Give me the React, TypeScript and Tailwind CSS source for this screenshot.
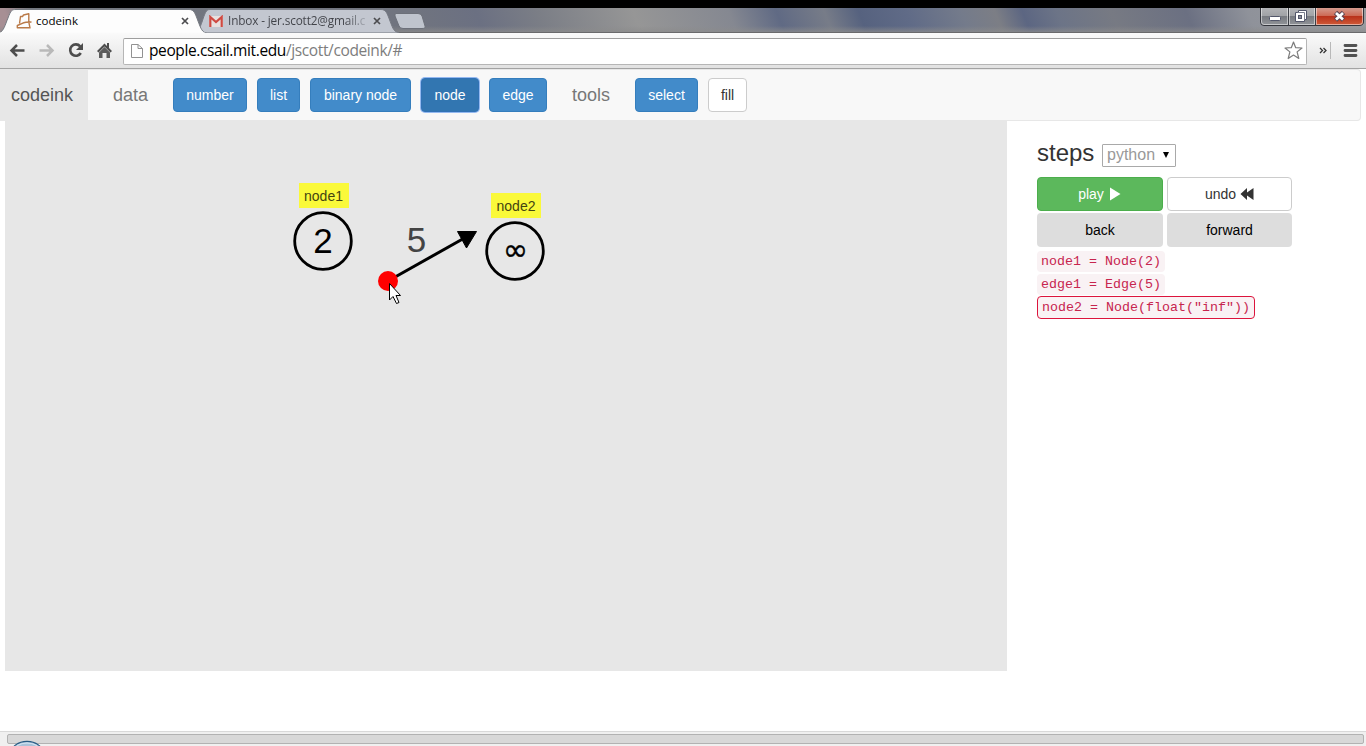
import React from "react";

function TabShapes() {
  return (
    <svg className="absolute inset-0" width="1366" height="25" viewBox="0 8 1366 25">
      <defs>
        <linearGradient id="glass" x1="0" x2="1366" y1="0" y2="0" gradientUnits="userSpaceOnUse" gradientTransform="skewX(22)">
          <stop offset="0" stopColor="#a78f94" />
          <stop offset="0.02" stopColor="#73777f" />
          <stop offset="0.3" stopColor="#70747f" />
          <stop offset="0.345" stopColor="#6b7082" />
          <stop offset="0.39" stopColor="#7b7e86" />
          <stop offset="0.46" stopColor="#969696" />
          <stop offset="0.53" stopColor="#858891" />
          <stop offset="0.565" stopColor="#606a84" />
          <stop offset="0.6" stopColor="#777c88" />
          <stop offset="0.625" stopColor="#56627f" />
          <stop offset="0.66" stopColor="#606b87" />
          <stop offset="0.7" stopColor="#747b8b" />
          <stop offset="0.725" stopColor="#7c7e85" />
          <stop offset="0.745" stopColor="#5c6682" />
          <stop offset="0.77" stopColor="#6c7487" />
          <stop offset="0.81" stopColor="#777a83" />
          <stop offset="0.865" stopColor="#6b7082" />
          <stop offset="0.91" stopColor="#8f929a" />
          <stop offset="1" stopColor="#9a9ca0" />
        </linearGradient>
        <linearGradient id="shade" x1="0" x2="0" y1="0" y2="1">
          <stop offset="0" stopColor="#8b8b8b" stopOpacity="0" />
          <stop offset="1" stopColor="#8b8b8b" stopOpacity="0.85" />
        </linearGradient>
      </defs>
      <rect y="8" width="1366" height="25" fill="url(#glass)" />
      <rect y="26" width="1366" height="7" fill="url(#shade)" />
      <path d="M0 32.500H1366" stroke="#6a6a6c" />
      <path d="M193 33C199 32 200 27 202 22C205 13 206 9.500 210 9.500H381C386 9.500 387 13 390 21C393 29 394 32 399 32.500V33Z" fill="#c3c7d0" stroke="#767a83" />
      <path d="M396 13.500H418Q421 13.500 422 16L425 26Q426 28.500 422 28.500H403Q400 28.500 399 26L395 16Q394.500 13.500 396 13.500Z" fill="#bfc4cd" stroke="#6c7079" />
      <path d="M-1 33C4 31 5 25 8 18C11 10 12 9.500 16 9.500H189C194 9.500 195 13 198 21C201 29 202 32 207 33.500H-1Z" fill="#fdfdfd" stroke="#777b82" />
      <path d="M0 33H205" stroke="#fafafa" />
    </svg>
  );
}

function SiteIcon() {
  return (
    <svg width="16" height="16" viewBox="0 0 16 16" className="shrink-0" fill="none" stroke="#ba7a48" strokeWidth="1.400">
      <path d="M3.500 10.500L4.500 3.500H6.500L7.500 2L12.800 .8V9L14 14.800H1.300V12.500C3.500 12 7 9.500 10 9.200L15.500 9" strokeLinejoin="round" />
    </svg>
  );
}

function MailIcon() {
  return (
    <svg width="14" height="12" viewBox="0 0 14 12" className="shrink-0">
      <path d="M0 1H14V12H0Z" fill="#e8e0df" />
      <path d="M1.300 12V2L7 7L12.700 2V12" fill="none" stroke="#cf4a42" strokeWidth="2.200" />
    </svg>
  );
}

function CloseMark() {
  return (
    <svg width="8" height="8" viewBox="0 0 8 8" className="shrink-0">
      <path d="M1 1L7 7M7 1L1 7" stroke="#4c4c4f" strokeWidth="1.700" />
    </svg>
  );
}

function WindowControls() {
  return (
    <svg width="106" height="19" viewBox="0 0 106 19" className="absolute right-0 top-0">
      <defs>
        <linearGradient id="ctl" x1="0" x2="0" y1="0" y2="1">
          <stop offset="0" stopColor="#b4b5b8" />
          <stop offset="0.48" stopColor="#a0a2a6" />
          <stop offset="0.5" stopColor="#777a80" />
          <stop offset="1" stopColor="#92959a" />
        </linearGradient>
        <linearGradient id="ctlClose" x1="0" x2="0" y1="0" y2="1">
          <stop offset="0" stopColor="#d59a8d" />
          <stop offset="0.45" stopColor="#cd6a55" />
          <stop offset="0.5" stopColor="#b9321b" />
          <stop offset="1" stopColor="#cf5a38" />
        </linearGradient>
      </defs>
      <path d="M.5 -1V14Q.5 17.500 4 17.500H99Q103.500 17.500 103.500 14V-1Z" fill="url(#ctl)" stroke="#34363d" />
      <path d="M56 0H103V14Q103 17 99 17H56Z" fill="url(#ctlClose)" />
      <path d="M1.500 0V14Q1.500 16.500 4 16.500H99Q102.500 16.500 102.500 14V0M27.500 0V16M29.500 0V16M54.500 0V16M56.500 0V16" fill="none" stroke="#fff" strokeOpacity=".5" />
      <path d="M28.500 0V17M55.500 0V17" stroke="#3c3f46" />
      <rect x="9.500" y="8.500" width="11" height="4" rx="1" fill="#fff" stroke="#52566a" />
      <path d="M38.500 2.500H46.500V11.500H44.500V13.500H35.500V4.500H38.500Z" fill="#fff" stroke="#52566a" />
      <path d="M37.500 4.500H44.500V12" fill="none" stroke="#777b8b" />
      <rect x="38.500" y="7.500" width="3" height="3" fill="#8d909a" stroke="#52566a" />
      <path d="M75.500 4.500L83.500 12M83.500 4.500L75.500 12" stroke="#5b4652" strokeWidth="4.800" />
      <path d="M76 5L83 11.500M83 5L76 11.500" stroke="#fff" strokeWidth="2.700" />
    </svg>
  );
}

function TabStrip() {
  return (
    <div className="relative flex h-[25px] shrink-0 font-['Open_Sans',sans-serif] text-xs text-[#222]">
      <TabShapes />
      <div className="relative flex h-[25px] w-[207px] items-center pl-4">
        <SiteIcon />
        <span className="ml-1 w-[145px] text-[11.500px] text-black">codeink</span>
        <CloseMark />
      </div>
      <div className="relative flex h-[25px] w-[190px] items-center pl-[2px]">
        <MailIcon />
        <span className="ml-[5px] w-[138px] whitespace-nowrap bg-linear-to-r from-[#404248] from-85% to-[#aeb2bb] bg-clip-text text-[11.800px] tracking-[-0.150px] text-transparent">
          Inbox - jer.scott2@gmail.c
        </span>
        <span className="ml-[7px] flex"><CloseMark /></span>
      </div>
      <WindowControls />
    </div>
  );
}

function Toolbar() {
  return (
    <div className="flex h-9 shrink-0 items-center border-b border-[#a3a3a3] bg-linear-to-b from-[#fafafa] to-[#e2e2e2]">
      <svg width="123" height="35" viewBox="0 33 123 35" className="shrink-0" fill="none">
        <path d="M24.500 50.500H11.500M17 45L11.500 50.500L17 56" stroke="#4d4d4d" strokeWidth="2.500" />
        <path d="M39.500 50.500H52.500M47 45L52.500 50.500L47 56" stroke="#b9b9b9" strokeWidth="2.500" />
        <path d="M80.200 46.300A5.700 5.700 0 1 0 80.800 53" stroke="#4d4d4d" strokeWidth="2.600" />
        <path d="M83 43V50H76Z" fill="#4d4d4d" />
        <path d="M97 51L104.500 43.500L107 46V43H109V48L112 51L110.500 52.500L104.500 46.500L98.500 52.500Z" fill="#4d4d4d" />
        <path d="M99 52.500L104.500 47L110 52.500V58H106.500V53H102.500V58H99Z" fill="#5b5b5b" />
      </svg>
      <div className="mt-px flex h-[27px] w-[1184px] shrink-0 items-center rounded-xs border border-[#b6b6b6] border-t-[#9e9e9e] bg-white pl-[7px] pr-[3px]">
        <svg width="12" height="16" viewBox="0 0 12 16" className="shrink-0" fill="none" stroke="#929292">
          <path d="M.5 1.500H7L11.500 5.500V14.500H.5ZM7 1.500V5.500H11.500" />
        </svg>
        <span className="-mt-px ml-1.5 grow whitespace-nowrap font-['Open_Sans',sans-serif] text-[15.500px] leading-none tracking-[-0.380px] text-[#7d7d7d]">
          <span className="text-black">people.csail.mit.edu</span>/jscott/codeink/#
        </span>
        <svg width="19" height="19" viewBox="0 0 19 19" fill="none" stroke="#7c7c7c" strokeWidth="1.200" className="-mt-px">
          <path d="M9.500 1L11.700 6.700L18 7L13.100 10.900L14.800 17.500L9.500 14L4.200 17.500L5.900 10.900L1 7L7.300 6.700Z" strokeLinejoin="round" />
        </svg>
      </div>
      <svg width="59" height="35" viewBox="1307 33 59 35" fill="none">
        <path d="M1320 48L1322.500 50.500L1320 53M1323.500 48L1326 50.500L1323.500 53" stroke="#333" strokeWidth="1.300" />
        <path d="M1330.500 42V59" stroke="#b8b8b8" />
        <path d="M1345 45.500H1356M1345 50.500H1356M1345 55.500H1356" stroke="#515151" strokeWidth="2.800" strokeLinecap="round" />
      </svg>
    </div>
  );
}

function NavButton({ label, className }: { label: string; className: string }) {
  return (
    <button className={`h-[34px] shrink-0 rounded-sm border text-sm leading-none ${className}`}>{label}</button>
  );
}

const primary = "border-[#357ebd] bg-[#428bca] text-white";

function NavBar() {
  return (
    <nav className="flex h-[52px] w-[1361px] shrink-0 items-center rounded-r-sm border border-l-0 border-[#e7e7e7] bg-[#f8f8f8] text-lg text-[#777]">
      <span className="flex h-[52px] w-[88px] shrink-0 items-center bg-[#e7e7e7] pl-[11px] text-[#555]">codeink</span>
      <span className="ml-[25px] w-[60px]">data</span>
      <div className="flex gap-[10px]">
        <NavButton label="number" className={`w-[74px] ${primary}`} />
        <NavButton label="list" className={`w-[43px] ${primary}`} />
        <NavButton label="binary node" className={`w-[101px] ${primary}`} />
        <NavButton label="node" className="w-[58px] border-[#3272b5] bg-[#3276b1] text-white ring-1 ring-[#94b9f0]" />
        <NavButton label="edge" className={`w-[58px] ${primary}`} />
      </div>
      <span className="ml-[25px] w-[63px]">tools</span>
      <div className="flex gap-[10px]">
        <NavButton label="select" className={`w-[63px] ${primary}`} />
        <NavButton label="fill" className="w-[39px] border-[#ccc] bg-white text-[#333]" />
      </div>
    </nav>
  );
}

function Diagram() {
  return (
    <div className="h-[550px] w-[1002px] shrink-0 bg-[#e7e7e7]">
      <svg width="1002" height="550" viewBox="5 121 1002 550" fontFamily="Liberation Sans, Arial, sans-serif" textAnchor="middle">
        <rect x="299" y="183" width="50" height="25" fill="#faf93a" />
        <text x="323.500" y="201" fontSize="14" fill="#444411">node1</text>
        <circle cx="323" cy="241" r="28.300" fill="none" stroke="#000" strokeWidth="2.800" />
        <text x="323" y="253" fontSize="35">2</text>
        <rect x="491" y="193" width="50" height="25" fill="#faf93a" />
        <text x="516" y="211" fontSize="14" fill="#444411">node2</text>
        <circle cx="515" cy="251" r="28.300" fill="none" stroke="#000" strokeWidth="2.800" />
        <text x="515.500" y="260" fontSize="30" fontFamily="DejaVu Sans, sans-serif" stroke="#000" strokeWidth=".4">∞</text>
        <text x="416.500" y="252" fontSize="35" fill="#444">5</text>
        <path d="M388 281L468 236" stroke="#000" strokeWidth="3" />
        <path d="M457.500 231.500H476.500L466.500 248Z" stroke="#000" strokeWidth="1" strokeLinejoin="round" />
        <circle cx="388" cy="281" r="10" fill="#f00" />
        <path d="M389.500 283.500V300L393 296.500L396.500 303.500L399 302.500L396 295.500H400.500Z" fill="#fff" stroke="#000" />
      </svg>
    </div>
  );
}

function Steps() {
  return (
    <aside className="ml-[30px] w-[255px] pt-[18px]">
      <div className="flex h-7 items-center">
        <h3 className="mr-[7px] w-[58px] text-2xl leading-7 text-[#333]">steps</h3>
        <div className="mt-1 flex h-[23px] w-[74px] items-center justify-between rounded-[1px] border border-[#a9a9a9] pl-1 pr-[6px] text-base leading-none text-[#999]">
          <span>python</span>
          <svg width="6" height="6" viewBox="0 0 6 6"><path d="M0 0H6L3 6Z" /></svg>
        </div>
      </div>
      <div className="mt-[10px] grid grid-cols-[126px_125px] gap-x-1 gap-y-[2px] text-sm leading-none">
        <button className="flex h-[34px] items-center justify-center gap-[5px] rounded-sm border border-[#4cae4c] bg-[#5cb85c] pr-px text-white">
          play
          <svg width="12" height="14" viewBox="0 0 12 14" fill="#fff"><path d="M1 .5L11.500 7L1 13.500Z" /></svg>
        </button>
        <button className="flex h-[34px] items-center justify-center gap-1 rounded-sm border border-[#ccc] bg-white text-[#333]">
          undo
          <svg width="14" height="12" viewBox="0 0 14 12" fill="#333"><path d="M7 0V4.500L13.500 0V12L7 7.500V12L.5 6Z" /></svg>
        </button>
        <button className="h-[34px] rounded-sm bg-[#ddd] text-black">back</button>
        <button className="h-[34px] rounded-sm bg-[#ddd] text-black">forward</button>
      </div>
      <div className="mt-1 flex flex-col items-start font-['Liberation_Mono',monospace] text-[13.330px] leading-none text-[#c7254e]">
        <code className="mb-[2px] flex h-[21px] w-[128px] items-center whitespace-pre rounded-sm bg-[#f9f2f4] pl-1 font-[inherit]">node1 = Node(2)</code>
        <code className="mb-px flex h-[21px] w-[128px] items-center whitespace-pre rounded-sm bg-[#f9f2f4] pl-1 font-[inherit]">edge1 = Edge(5)</code>
        <code className="flex h-[23px] w-[218px] items-center whitespace-pre rounded-sm border border-[#dc143c] bg-[#f9f2f4] pl-1 font-[inherit]">node2 = Node(float("inf"))</code>
      </div>
    </aside>
  );
}

function BottomBar() {
  return (
    <div className="relative flex h-[15px] shrink-0 border-t border-[#d9d9d9] bg-[#f0f0f0] pl-[7px] pr-[2px] pt-[2px]">
      <div className="h-[10px] w-full rounded-xs border border-[#b2b2b2] bg-[#d8d8d8]" />
      <svg width="28" height="6" viewBox="0 0 28 6" className="absolute bottom-0 left-[13px]">
        <ellipse cx="14" cy="13.500" rx="16" ry="12.200" fill="#aac3da" stroke="#285a83" strokeWidth="1.200" />
        <path d="M4 5.500Q14 .5 24 5.500" fill="none" stroke="#d5e7f4" strokeWidth="1.200" />
      </svg>
    </div>
  );
}

export default function App() {
  return (
    <div className="flex h-[746px] w-[1366px] flex-col overflow-hidden bg-white font-['Liberation_Sans',Arial,sans-serif]">
      <div className="h-2 shrink-0 bg-black" />
      <TabStrip />
      <Toolbar />
      <NavBar />
      <main className="flex h-[610px] shrink-0 pl-[5px]">
        <Diagram />
        <Steps />
      </main>
      <BottomBar />
    </div>
  );
}
